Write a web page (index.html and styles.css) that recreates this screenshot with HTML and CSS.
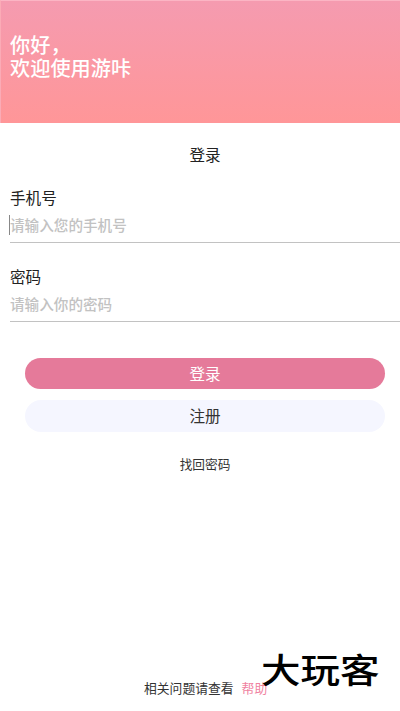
FILE: index.html
```html
<!DOCTYPE html>
<html lang="zh-CN">
<head>
<meta charset="utf-8">
<title>登录</title>
<link rel="stylesheet" href="styles.css">
</head>
<body>
<header class="hero">
  <h1 class="greeting">你好，<br>欢迎使用游咔</h1>
</header>
<main class="login">
  <h2 class="title">登录</h2>
  <div class="field">
    <div class="label">手机号</div>
    <div class="input focused">请输入您的手机号</div>
  </div>
  <div class="field">
    <div class="label">密码</div>
    <div class="input">请输入你的密码</div>
  </div>
  <div class="actions">
    <div class="button primary">登录</div>
    <div class="button secondary">注册</div>
  </div>
  <div class="forgot">找回密码</div>
</main>
<footer class="footer">
  <span>相关问题请查看</span><span class="help">帮助</span>
</footer>
<div class="watermark">大玩客</div>
</body>
</html>
```

FILE: styles.css
```css
* { box-sizing: border-box; }
body {
  margin: 0;
  width: 400px;
  height: 711px;
  position: relative;
  display: flex;
  flex-direction: column;
  overflow: hidden;
  background: #fff;
  color: #333;
  font-family: "Noto Sans CJK SC", sans-serif;
}
.hero {
  height: 123px;
  flex: none;
  padding: 32px 9px 0;
  border-top: 1px solid #fbb5c4;
  border-left: 1px solid #fbabb6;
  background: linear-gradient(#f59bb0, #ff9698);
}
.greeting {
  margin: 0;
  font-size: 20.2px;
  line-height: 23px;
  font-weight: 500;
  color: #fff;
}
.login {
  flex: 1;
  padding-left: 10px;
  display: flex;
  flex-direction: column;
}
.title {
  margin: 19px 0 19px;
  text-align: center;
  font-size: 15.6px;
  line-height: 24px;
  font-weight: 400;
  color: #222;
}
.field {
  height: 58px;
  margin-bottom: 21px;
  border-bottom: 1px solid #c2c2c2;
}
.label {
  font-size: 15.6px;
  line-height: 24px;
  font-weight: 400;
  color: #222;
}
.input {
  position: relative;
  margin-top: 5px;
  font-size: 14.6px;
  line-height: 22px;
  font-weight: 500;
  color: #c2c2c2;
}
.focused::before {
  content: "";
  position: absolute;
  left: -1px;
  top: 1px;
  width: 1px;
  height: 20px;
  background: #888;
}
.actions {
  display: flex;
  flex-direction: column;
  gap: 11px;
  padding: 14.5px 15px 0;
}
.button {
  height: 31.5px;
  border-radius: 16px;
  text-align: center;
  font-size: 15.6px;
  line-height: 31px;
}
.primary { background: #e57a9a; color: #fff; }
.secondary { background: #f5f6ff; color: #333; }
.forgot {
  margin-top: 22px;
  text-align: center;
  font-size: 12.7px;
  line-height: 20px;
}
.footer {
  display: flex;
  gap: 8px;
  padding-left: 144px;
  margin-bottom: 13px;
  font-size: 12.8px;
  line-height: 20px;
  white-space: nowrap;
}
.help { color: #f0829f; }
.watermark {
  position: absolute;
  left: 261px;
  top: 648px;
  font-size: 39.5px;
  line-height: 40px;
  font-weight: 500;
  color: #000;
  white-space: nowrap;
  transform: scaleY(.87);
}
```
